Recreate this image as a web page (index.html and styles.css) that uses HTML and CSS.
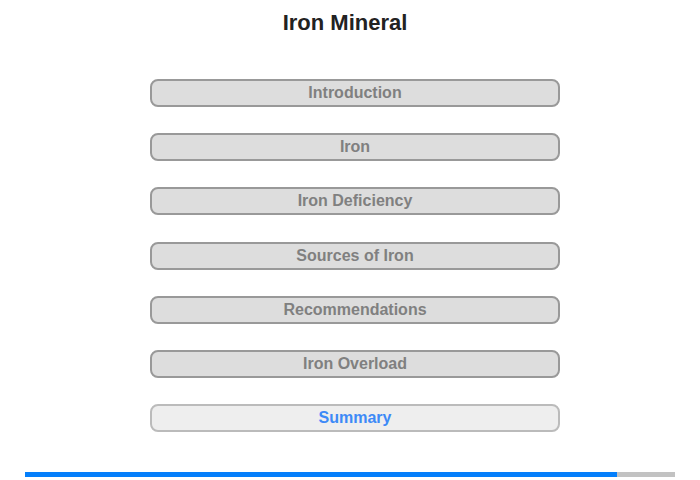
FILE: index.html
```html
<!DOCTYPE html>
<html>
<head>
<meta charset="utf-8">
<link rel="stylesheet" href="styles.css">
</head>
<body>
<div class="page">
  <h1 class="title">Iron Mineral</h1>
  <nav class="menu">
    <div class="item">Introduction</div>
    <div class="item">Iron</div>
    <div class="item">Iron Deficiency</div>
    <div class="item">Sources of Iron</div>
    <div class="item">Recommendations</div>
    <div class="item">Iron Overload</div>
    <div class="item current">Summary</div>
  </nav>
  <div class="progress"><div class="progress-fill" style="width:91.1%"></div></div>
</div>
</body>
</html>
```
FILE: styles.css
```css
* { box-sizing: border-box; }
html, body { margin: 0; padding: 0; background: #fff; }
body { font-family: "Liberation Sans", Arial, sans-serif; }
.page { width: 700px; height: 480px; display: flex; flex-direction: column; align-items: center; }
.title { margin: 10px 10px 0 0; font-size: 22px; line-height: 26px; font-weight: bold; color: #222; }
.menu { margin: 43px 0 0 10px; display: flex; flex-direction: column; gap: 26.2px; }
.item { width: 410px; height: 28px; border: 2px solid #999; border-radius: 8px; background: #ddd; color: #808080; font-weight: bold; font-size: 16px; line-height: 24px; text-align: center; }
.item.current { background: #eee; border-color: #bbb; color: #3d8af7; }
.progress { margin-top: 40px; width: 650px; height: 5px; background: #c2c2c2; }
.progress-fill { height: 100%; background: #057ffb; }
```
